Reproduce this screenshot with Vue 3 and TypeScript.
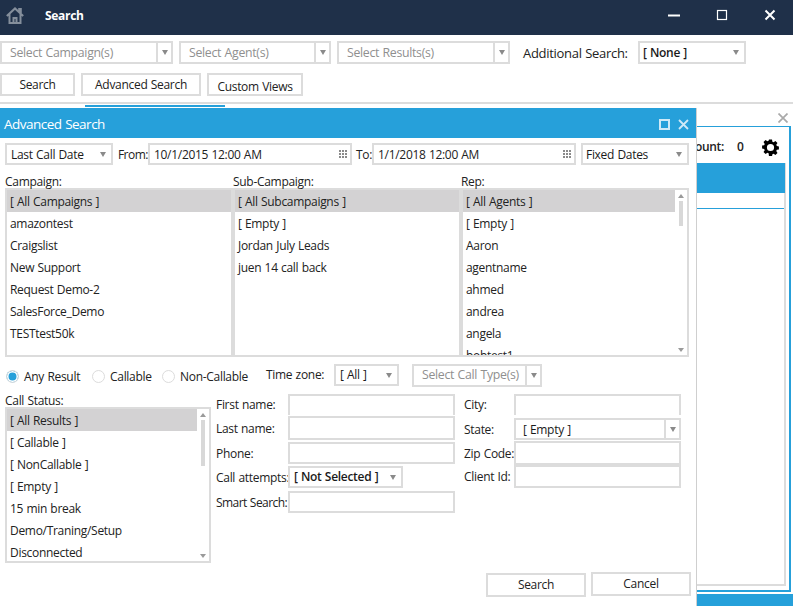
<script setup lang="ts">
const campaigns: string[] = ['[ All Campaigns ]', 'amazontest', 'Craigslist', 'New Support', 'Request Demo-2', 'SalesForce_Demo', 'TESTtest50k']
const subCampaigns: string[] = ['[ All Subcampaigns ]', '[ Empty ]', 'Jordan July Leads', 'juen 14 call back']
const reps: string[] = ['[ All Agents ]', '[ Empty ]', 'Aaron', 'agentname', 'ahmed', 'andrea', 'angela', 'bobtest1']
const statuses: string[] = ['[ All Results ]', '[ Callable ]', '[ NonCallable ]', '[ Empty ]', '15 min break', 'Demo/Traning/Setup', 'Disconnected']
const filters = [
  { label: 'Select Campaign(s)', cls: 'f-campaign' },
  { label: 'Select Agent(s)', cls: 'f-agent' },
  { label: 'Select Results(s)', cls: 'f-results' },
]
</script>

<template>
  <div class="app">
    <header class="titlebar">
      <svg class="home" viewBox="0 0 18 17" width="18" height="17">
        <path d="M0.8 9 L9 1.4 L17.2 9 M3.5 7 V16 H14.5 V7 M7.5 16 V11 H10.5 V16 M13.2 4.5 V2 H14.8 V6" fill="none" stroke="#848e9b" stroke-width="2" />
      </svg>
      <span class="apptitle">Search</span>
      <span class="winbtns">
        <svg width="14" height="14" viewBox="0 0 14 14"><path d="M1 7.5H13" stroke="#fff" stroke-width="2" /></svg>
        <svg width="14" height="14" viewBox="0 0 14 14"><rect x="2.5" y="2.5" width="9" height="9" fill="none" stroke="#fff" stroke-width="1.2" /></svg>
        <svg width="14" height="14" viewBox="0 0 14 14"><path d="M2.5 2.5L11.5 11.5M11.5 2.5L2.5 11.5" stroke="#fff" stroke-width="2" /></svg>
      </span>
    </header>

    <div class="filters">
      <div v-for="f in filters" :key="f.label" class="combo" :class="f.cls">
        <span class="combo-text">{{ f.label }}</span>
        <span class="combo-btn"><i class="caret"></i></span>
      </div>
      <label class="add-label">Additional Search:</label>
      <div class="plain-select none-select"><span>[ None ]</span><i class="caret"></i></div>
    </div>

    <nav class="tabs">
      <button class="btn tab-search">Search</button>
      <button class="btn tab-adv">Advanced Search</button>
      <button class="btn tab-custom"><span>Custom Views</span></button>
    </nav>
    <div class="rule"></div>

    <section class="workspace">
      <div class="ws-close"><svg width="10" height="10" viewBox="0 0 10 10"><path d="M0.5 0.5L9.5 9.5M9.5 0.5L0.5 9.5" stroke="#a9a9a9" stroke-width="1.7" /></svg></div>
      <div class="ws-panel">
        <div class="ws-count">
          <span class="ws-count-label">Count:</span>
          <span class="ws-zero">0</span>
          <svg class="gear" width="17" height="17" viewBox="0 0 18 18">
            <path fill="#000" fill-rule="evenodd" d="M7.4 0.6h3.2l.4 2.2 1.3.6 1.9-1.3 2.2 2.2-1.3 1.9.6 1.3 2.2.4v3.2l-2.2.4-.6 1.3 1.3 1.9-2.2 2.2-1.9-1.3-1.3.6-.4 2.2H7.4L7 15.2l-1.3-.6-1.9 1.3-2.2-2.2 1.3-1.9-.6-1.3-2.2-.4V6.9l2.2-.4.6-1.3-1.3-1.9 2.2-2.2 1.9 1.3L7 1.8zM9 5.2a3.8 3.8 0 1 0 0 7.6 3.8 3.8 0 0 0 0-7.6z" />
          </svg>
        </div>
        <div class="ws-inner">
          <div class="ws-bar"></div>
          <div class="ws-line"></div>
        </div>
      </div>
      <div class="ws-foot"></div>
    </section>

    <div class="underline"></div>

    <section class="modal">
      <header class="modal-head">
        <span class="modal-title">Advanced Search</span>
        <span class="modal-icons">
          <svg width="11" height="11" viewBox="0 0 11 11"><rect x="1" y="1" width="9" height="9" fill="none" stroke="#cfe9f7" stroke-width="2" /></svg>
          <svg width="11" height="11" viewBox="0 0 11 11"><path d="M1 1L10 10M10 1L1 10" stroke="#cfe9f7" stroke-width="1.8" /></svg>
        </span>
      </header>

      <div class="modal-body">
        <div class="date-row">
          <div class="plain-select date-type"><span>Last Call Date</span><i class="caret"></i></div>
          <label class="from-label">From:</label>
          <div class="date-input">
            <span>10/1/2015 12:00 AM</span>
            <svg width="9" height="9" viewBox="0 0 9 9" fill="#8a8a8a"><path d="M0 0h2v2H0zM3 0h2v2H3zM6 0h2v2H6zM0 3h2v2H0zM3 3h2v2H3zM6 3h2v2H6zM0 6h2v2H0zM3 6h2v2H3zM6 6h2v2H6z" /></svg>
          </div>
          <label class="to-label">To:</label>
          <div class="date-input">
            <span>1/1/2018 12:00 AM</span>
            <svg width="9" height="9" viewBox="0 0 9 9" fill="#8a8a8a"><path d="M0 0h2v2H0zM3 0h2v2H3zM6 0h2v2H6zM0 3h2v2H0zM3 3h2v2H3zM6 3h2v2H6zM0 6h2v2H0zM3 6h2v2H3zM6 6h2v2H6z" /></svg>
          </div>
          <div class="plain-select date-mode"><span>Fixed Dates</span><i class="caret"></i></div>
        </div>

        <div class="lists">
          <div class="list-col">
            <div class="list-label">Campaign:</div>
            <div class="listbox">
              <ul class="rows">
                <li v-for="(c, i) in campaigns" :key="c" :class="{ sel: i === 0 }">{{ c }}</li>
              </ul>
            </div>
          </div>
          <div class="list-col">
            <div class="list-label">Sub-Campaign:</div>
            <div class="listbox">
              <ul class="rows">
                <li v-for="(c, i) in subCampaigns" :key="c" :class="{ sel: i === 0 }">{{ c }}</li>
              </ul>
            </div>
          </div>
          <div class="list-col">
            <div class="list-label">Rep:</div>
            <div class="listbox">
              <ul class="rows">
                <li v-for="(c, i) in reps" :key="c" :class="{ sel: i === 0 }">{{ c }}</li>
              </ul>
              <div class="scroll rep-scroll">
                <i class="arrow-up"></i>
                <b class="thumb"></b>
                <i class="arrow-down"></i>
              </div>
            </div>
          </div>
        </div>

        <div class="radio-row">
          <span class="radio on"></span><span class="radio-text r1">Any Result</span>
          <span class="radio"></span><span class="radio-text r2">Callable</span>
          <span class="radio"></span><span class="radio-text r3">Non-Callable</span>
          <label class="tz-label">Time zone:</label>
          <div class="plain-select tz-select"><span>[ All ]</span><i class="caret"></i></div>
          <div class="combo call-type">
            <span class="combo-text">Select Call Type(s)</span>
            <span class="combo-btn"><i class="caret"></i></span>
          </div>
        </div>

        <div class="lower">
          <div class="status-col">
            <div class="list-label">Call Status:</div>
            <div class="listbox status-box">
              <ul class="rows">
                <li v-for="(c, i) in statuses" :key="c" :class="{ sel: i === 0 }">{{ c }}</li>
              </ul>
              <div class="scroll status-scroll">
                <i class="arrow-up"></i>
                <b class="thumb"></b>
                <i class="arrow-down"></i>
              </div>
            </div>
          </div>

          <div class="fields left-fields">
            <div class="field h21 mb1"><label>First name:</label><div class="input first"></div></div>
            <div class="field h24 mb2"><label>Last name:</label><div class="input"></div></div>
            <div class="field h22 mb2"><label>Phone:</label><div class="input"></div></div>
            <div class="field h22 mb3"><label>Call attempts:</label><div class="plain-select attempts"><span>[ Not Selected ]</span><i class="caret"></i></div></div>
            <div class="field h22"><label class="tight">Smart Search:</label><div class="input"></div></div>
          </div>

          <div class="fields right-fields">
            <div class="field h21 mb3"><label>City:</label><div class="input first"></div></div>
            <div class="field h22 mb1"><label>State:</label>
              <div class="combo state"><span class="combo-text">[ Empty ]</span><span class="combo-btn"><i class="caret"></i></span></div>
            </div>
            <div class="field h24"><label>Zip Code:</label><div class="input"></div></div>
            <div class="field h23"><label>Client Id:</label><div class="input"></div></div>
          </div>
        </div>

        <div class="actions">
          <button class="btn act-search">Search</button>
          <button class="btn act-cancel">Cancel</button>
        </div>
      </div>
    </section>
  </div>
</template>

<style>
html, body { margin: 0; background: #fff; overflow: hidden; }
</style>

<style scoped>
* { box-sizing: border-box; }
.app {
  position: relative;
  width: 793px;
  height: 606px;
  overflow: hidden;
  background: #fff;
  color: #222;
  font: 12px/16px "Open Sans", "Noto Sans", sans-serif;
  letter-spacing: -0.3px;
  word-spacing: 0.5px;
}
ul { list-style: none; margin: 0; padding: 0; }
.titlebar {
  height: 35px;
  background: #1f3049;
  display: flex;
  align-items: center;
  padding-left: 6px;
}
.home { flex: none; margin-top: -5px; }
.apptitle { margin-left: 21px; color: #fff; font-weight: 700; margin-top: -3px; }
.winbtns { margin-left: auto; display: flex; gap: 34px; padding-right: 16px; margin-top: -5px; }

.filters { display: flex; align-items: center; height: 23px; margin-top: 6px; }
.combo {
  display: flex;
  height: 23px;
  border: 2px solid #dcdcdc;
  color: #8f8f8f;
  align-items: center;
  flex: none;
}
.combo-text { flex: 1; padding-left: 8px; white-space: nowrap; overflow: hidden; font-size: 12.3px; }
.combo-btn {
  width: 15px;
  height: 100%;
  border-left: 2px solid #dcdcdc;
  display: flex;
  align-items: center;
  justify-content: center;
}
.caret {
  width: 0;
  height: 0;
  border-left: 3.5px solid transparent;
  border-right: 3.5px solid transparent;
  border-top: 5px solid #8a8a8a;
  flex: none;
}
.f-campaign { width: 173px; }
.f-agent { width: 152px; margin-left: 6px; }
.f-results { width: 173px; margin-left: 6px; }
.add-label { margin-left: 13px; width: 115px; font-size: 13px; letter-spacing: -0.3px; }
.plain-select {
  display: flex;
  align-items: center;
  justify-content: space-between;
  border: 2px solid #dcdcdc;
  height: 23px;
  padding: 0 5px 0 3px;
  color: #1a1a1a;
  font-weight: 600;
  flex: none;
  white-space: nowrap;
}
.none-select { width: 108px; }

.tabs { display: flex; gap: 6px; margin-top: 9px; }
.btn {
  height: 23px;
  background: #fff;
  border: 2px solid #dcdcdc;
  font: inherit;
  letter-spacing: inherit;
  word-spacing: inherit;
  color: #222;
  padding: 0;
  flex: none;
}
.tab-search { width: 75px; }
.tab-adv { width: 120px; }
.tab-custom { width: 96px; }
.tab-custom span { position: relative; top: 2px; }
.rule { height: 2px; margin-top: 6px; background: #dcdcdc; }

.workspace {
  display: flex;
  flex-direction: column;
  align-items: flex-end;
  height: 504px;
}
.ws-close { height: 22px; padding: 7px 5px 0 0; }
.ws-panel {
  width: 96px;
  margin-right: 2px;
  height: 466px;
  border: solid #26a0da;
  border-width: 1px 2px 2px 1px;
  display: flex;
  flex-direction: column;
  padding-right: 3px;
  padding-bottom: 4px;
}
.ws-count { height: 36px; padding-top: 4px; display: flex; align-items: center; }
.ws-count-label { width: 28px; flex: none; display: flex; justify-content: flex-end; font-weight: 600; white-space: nowrap; }
.ws-zero { margin-left: 13px; width: 25px; flex: none; font-weight: 600; }
.gear { flex: none; }
.ws-inner { flex: 1; border: solid #dcdcdc; border-width: 0 2px 2px 0; display: flex; flex-direction: column; }
.ws-bar { height: 30px; background: #26a0da; margin-right: -1px; }
.ws-line { height: 1px; margin-top: 15px; background: #26a0da; }
.ws-foot { width: 96px; height: 12px; margin-top: 2px; background: #26a0da; }

.underline { position: absolute; left: 85px; top: 105px; width: 140px; height: 2px; background: #26a0da; }

.modal {
  position: absolute;
  left: 0;
  top: 108px;
  width: 697px;
  height: 498px;
  background: #fff;
  border-right: 1px solid #cfcfcf;
  display: flex;
  flex-direction: column;
}
.modal-head {
  flex: none;
  height: 30px;
  padding: 2px 7px 0 4px;
  background: #26a0da;
  color: #fff;
  display: flex;
  align-items: center;
  justify-content: space-between;
}
.modal-title { font-size: 13.5px; letter-spacing: -0.5px; }
.modal-icons { display: flex; gap: 8px; }
.modal-body { flex: 1; padding: 5px 0 0 5px; display: flex; flex-direction: column; }

.date-row { display: flex; align-items: center; height: 22px; }
.date-row .plain-select { height: 22px; font-weight: 500; }
.date-row span, .date-row label { padding-top: 2px; }
.date-type { width: 108px; padding-left: 4px; }
.from-label { width: 35px; text-align: right; flex: none; letter-spacing: -0.5px; }
.date-input {
  width: 204px;
  height: 22px;
  border: 2px solid #dcdcdc;
  display: flex;
  align-items: center;
  justify-content: space-between;
  padding: 0 2px 0 4px;
  flex: none;
}
.to-label { width: 20px; text-align: right; flex: none; }
.date-mode { width: 108px; margin-left: 5px; }

.lists { display: flex; margin-top: 10px; }
.list-col { width: 228px; flex: none; }
.list-label { height: 13px; line-height: 14px; }
.listbox {
  display: flex;
  height: 169px;
  border: 2px solid #dcdcdc;
  overflow: hidden;
}
.rows { flex: 1; min-width: 0; }
.rows li { height: 22px; line-height: 23px; padding-left: 3px; white-space: nowrap; }
.rows li.sel { background: #d3d2d3; }
.scroll {
  flex: none;
  width: 12px;
  display: flex;
  flex-direction: column;
  align-items: center;
  padding: 4px 0 3px;
}
.thumb { display: block; width: 4px; background: #d8d8d8; margin-top: 3px; }
.arrow-up, .arrow-down { width: 0; height: 0; border-left: 3px solid transparent; border-right: 3px solid transparent; }
.arrow-up { border-bottom: 4px solid #9a9a9a; }
.arrow-down { border-top: 4px solid #9a9a9a; margin-top: auto; }
.rep-scroll .thumb { height: 25px; }

.radio-row { display: flex; align-items: center; height: 22px; margin-top: 7px; padding-left: 1px; }
.radio { width: 13px; height: 13px; margin-top: 2px; border-radius: 50%; border: 1.5px solid #dcdcdc; flex: none; background: #fff; }
.radio.on { background: #26a0da; box-shadow: inset 0 0 0 1.5px #fff; }
.radio-text { flex: none; margin-left: 5px; padding-top: 3px; }
.r1 { width: 68px; }
.r2 { width: 52px; }
.r3 { width: 86px; }
.tz-label { width: 68px; flex: none; }
.tz-select { width: 65px; height: 22px; font-weight: 500; padding-left: 4px; }
.call-type { width: 130px; margin-left: 13px; }

.lower { display: flex; margin-top: 8px; }
.status-col { width: 206px; flex: none; }
.status-box { height: 156px; }
.status-scroll .thumb { height: 46px; }
.fields { display: flex; flex-direction: column; flex: none; }
.field { display: flex; align-items: center; }
.field label { flex: none; white-space: nowrap; padding-top: 1px; }
.left-fields { width: 239px; margin-left: 5px; }
.left-fields label { width: 72px; }
.right-fields { width: 217px; margin-left: 9px; }
.right-fields label { width: 50px; }
.field .tight { letter-spacing: -0.55px; }
.h21 { height: 21px; }
.h22 { height: 22px; }
.h23 { height: 23px; }
.h24 { height: 24px; }
.mb1 { margin-bottom: 1px; }
.mb2 { margin-bottom: 2px; }
.mb3 { margin-bottom: 3px; }
.input { flex: none; width: 167px; height: 100%; border: 2px solid #dcdcdc; }
.input.first { border-bottom: none; }
.attempts { width: 115px; height: 22px; padding-left: 4px; }
.state { width: 167px; height: 22px; color: #1a1a1a; }
.state .combo-text { font-size: 12px; padding-left: 7px; padding-top: 2px; }

.actions { display: flex; margin-top: auto; margin-bottom: 9px; padding-left: 481px; gap: 5px; align-items: flex-start; }
.act-search { width: 100px; height: 24px; margin-top: 1px; }
.act-cancel { width: 100px; height: 24px; }
</style>
